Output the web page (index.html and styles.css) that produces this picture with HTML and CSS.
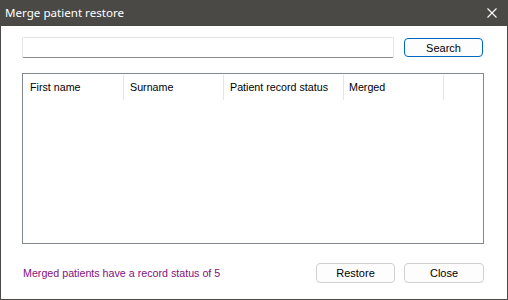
FILE: index.html
```html
<!DOCTYPE html>
<html lang="en">
<head>
    <meta charset="UTF-8">
    <title>Merge patient restore</title>
    <link rel="stylesheet" href="styles.css">
</head>
<body>
    <div class="window">
        <!-- Title bar -->
        <div class="title-bar">
            <span class="title">Merge patient restore</span>
            <svg class="close-icon" width="10" height="10" viewBox="0 0 10 10">
                <path d="M0.5 0.5 L9.5 9.5 M9.5 0.5 L0.5 9.5" stroke="#ffffff" stroke-width="1.1" fill="none"/>
            </svg>
        </div>

        <div class="content">
            <div class="search-row">
                <input type="text" class="search-input">
                <button class="btn btn-default">Search</button>
            </div>

            <div class="list">
                <div class="list-header">
                    <div class="col col-first">First name</div>
                    <div class="col col-surname">Surname</div>
                    <div class="col col-status">Patient record status</div>
                    <div class="col col-merged">Merged</div>
                </div>
            </div>

            <div class="footer">
                <span class="note">Merged patients have a record status of 5</span>
                <div class="buttons">
                    <button class="btn">Restore</button>
                    <button class="btn">Close</button>
                </div>
            </div>
        </div>
    </div>
</body>
</html>
```

FILE: styles.css
```css
* {
    margin: 0;
    padding: 0;
    box-sizing: border-box;
}

body {
    background: #ffffff;
    font-family: 'Liberation Sans', Arial, sans-serif;
    font-size: 10.7px;
    color: #000000;
}

.window {
    width: 508px;
    height: 300px;
    border: 1px solid #4a4946;
    border-top: none;
    display: flex;
    flex-direction: column;
    background: #ffffff;
}

/* Title bar */
.title-bar {
    height: 26px;
    margin: 0 -1px;
    background: #4a4946;
    display: flex;
    align-items: center;
    justify-content: space-between;
    padding: 0 11px 1px 5px;
}

.title {
    font-family: 'Noto Sans', sans-serif;
    font-size: 11.6px;
    color: #ffffff;
}

.close-icon {
    display: block;
    margin-top: 1px;
}

.content {
    flex: 1;
    padding: 11px 23px 0 21px;
    display: flex;
    flex-direction: column;
}

/* Search row */
.search-row {
    display: flex;
    align-items: center;
    gap: 10px;
    height: 21px;
}

.search-input {
    width: 372px;
    height: 21px;
    border: 1px solid #e3e3e3;
    border-bottom-color: #8a8a8a;
    border-radius: 2px;
    outline: none;
    background: #ffffff;
}

.btn {
    width: 79px;
    height: 20px;
    border: 1px solid #d0d0d0;
    border-radius: 4px;
    background: #fdfdfd;
    font-family: 'Liberation Sans', Arial, sans-serif;
    font-size: 11px;
    color: #000000;
}

.btn-default {
    height: 19px;
    border-color: #0067c0;
}

/* List view */
.list {
    margin-top: 15px;
    height: 171px;
    border: 1px solid #828790;
}

.list-header {
    display: flex;
    height: 26px;
    padding-top: 1px;
}

.col {
    height: 25px;
    border-right: 1px solid #e5e5e5;
    padding-left: 6px;
    padding-top: 6px;
    white-space: nowrap;
}

.col-first { width: 101px; padding-left: 7px; }
.col-surname { width: 100px; }
.col-status { width: 120px; }
.col-merged { width: 100px; padding-left: 5px; }

/* Footer */
.footer {
    margin-top: 19px;
    display: flex;
    align-items: center;
    justify-content: space-between;
    height: 20px;
}

.note {
    color: #82107f;
    padding-left: 1px;
}

.buttons {
    display: flex;
    gap: 9px;
}

.buttons .btn:last-child {
    width: 80px;
}
```
